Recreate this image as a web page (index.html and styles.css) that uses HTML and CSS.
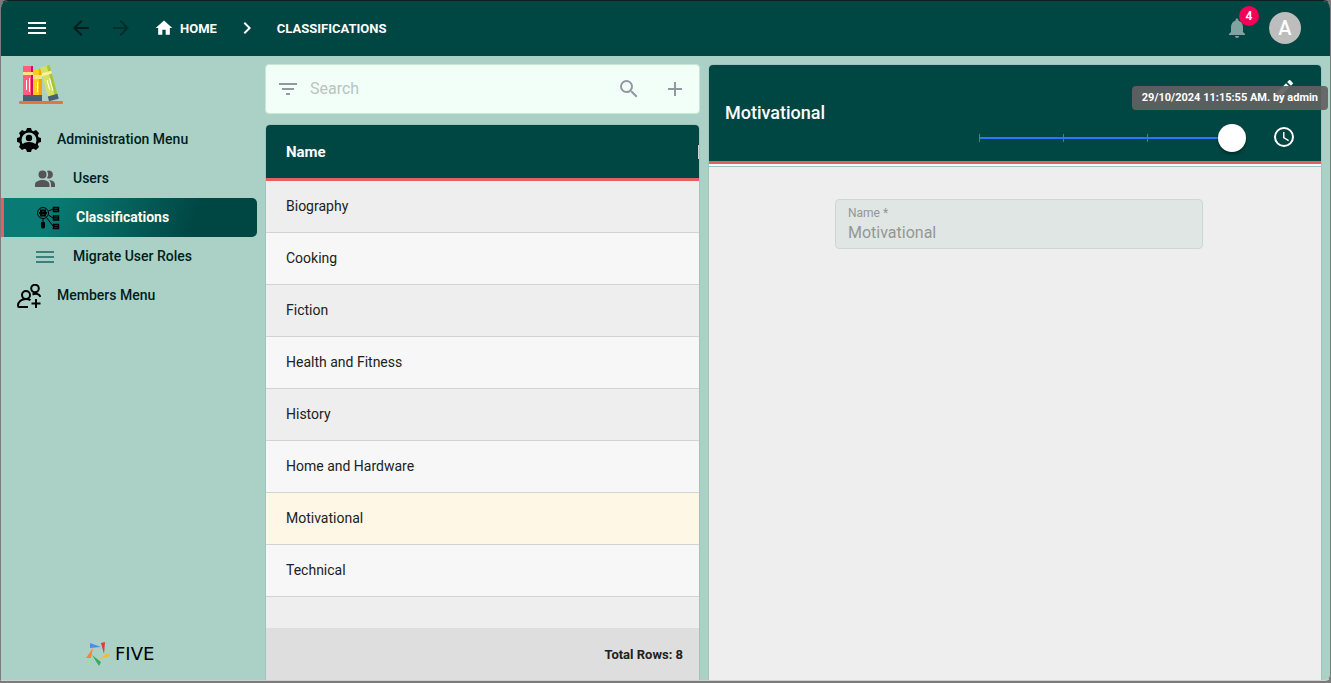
FILE: index.html
```html
<!DOCTYPE html>
<html lang="en">
<head>
<meta charset="utf-8">
<title>Classifications</title>
<link rel="stylesheet" href="styles.css">
</head>
<body>
<div class="app">
  <header class="topbar">
    <button class="icon-btn" aria-label="Menu"><svg class="icon" viewBox="0 0 24 24"><path d="M3 18h18v-2H3v2zm0-5h18v-2H3v2zm0-7v2h18V6H3z"/></svg></button>
    <button class="icon-btn nav-back" aria-label="Back"><svg class="icon" viewBox="0 0 24 24"><path d="M20 11H7.800l5.600-5.600L12 4l-8 8 8 8 1.400-1.400L7.800 13H20z"/></svg></button>
    <button class="icon-btn nav-forward" aria-label="Forward" disabled><svg class="icon" viewBox="0 0 24 24"><path d="M12 4l-1.400 1.400L16.200 11H4v2h12.200l-5.600 5.600L12 20l8-8z"/></svg></button>
    <nav class="crumbs" aria-label="Breadcrumb">
      <a class="crumb" href="#"><svg class="icon icon-home" viewBox="0 0 24 24"><path d="M10 20v-6h4v6h5v-8h3L12 3 2 12h3v8z"/></svg>HOME</a>
      <svg class="icon icon-chevron" viewBox="0 0 24 24"><path d="M10 6L8.600 7.400l4.600 4.600-4.600 4.600L10 18l6-6z"/></svg>
      <a class="crumb" href="#">CLASSIFICATIONS</a>
    </nav>
    <button class="icon-btn bell" aria-label="Notifications"><svg class="icon" viewBox="0 0 24 24"><path d="M12 22c1.100 0 2-.9 2-2h-4c0 1.100.9 2 2 2zm6-6v-5c0-3.070-1.640-5.640-4.500-6.320V4c0-.83-.67-1.500-1.500-1.500s-1.500.67-1.500 1.500v.68C7.630 5.360 6 7.920 6 11v5l-2 2v1h16v-1l-2-2z"/></svg><span class="badge">4</span></button>
    <button class="avatar">A</button>
  </header>

  <div class="workspace">
    <aside class="sidebar">
      <svg class="books" viewBox="0 0 44 40">
        <path fill="#ff5f7e" d="M4 1h10v35H4z"/><path fill="#d80b5c" d="M12 1h2v35h-2z"/><path fill="#ffe37d" d="M4 7h10v3H4z"/>
        <path fill="#475f75" d="M4 30h10v6H4z"/><path stroke="#fff" d="M7.500 15v10M10.500 13v14"/>
        <path fill="#ffcb1f" d="M14 4h9v32h-9z"/><path fill="#ffa000" d="M20 4h3v32h-3z"/><path fill="#ffe37d" d="M14 10h9v4h-9z"/>
        <path fill="#475f75" d="M14 30h9v6h-9z"/><path stroke="#fff" d="M18.500 17v10"/>
        <g transform="rotate(-15 31 36)"><path fill="#d4e165" d="M30 1h10v35H30z"/><path fill="#a5c63b" d="M37 1h3v35h-3z"/><path fill="#fff09a" d="M30 7h10v3H30z"/><path fill="#475f75" d="M30 31h10v5H30z"/><path stroke="#fff" d="M33.500 15v10M36.500 14v13"/></g>
        <rect fill="#dc7840" y="36" width="44" height="3" rx="1"/>
      </svg>
      <nav class="menu">
        <a class="menu-item" href="#"><svg class="icon" viewBox="0 0 24 24"><path d="M10 0h4l.8 2.500 1.700.7L19 2l3 3-1.200 2.500.7 1.700L24 10v4l-2.500.8-.7 1.700L22 19l-3 3-2.500-1.200-1.700.7L14 24h-4l-.8-2.500-1.700-.7L5 22l-3-3 1.200-2.500-.7-1.700L0 14v-4l2.500-.8.7-1.700L2 5l3-3 2.500 1.200 1.700-.7z"/><circle class="gear-hole" cx="12" cy="12" r="7.500"/><circle cx="12" cy="10" r="3.200"/><path d="M5 17c2-4 12-4 14 0-3 4-11 4-14 0z"/></svg><span class="menu-label">Administration Menu</span></a>
        <a class="menu-item sub" href="#"><svg class="icon icon-users" viewBox="0 0 24 24"><circle cx="9.500" cy="7.500" r="4"/><path d="M14 4a4 4 0 1 1 0 7c1.500-2 1.500-5 0-7zM2 20v-2.500C2 14.500 6 13 9.500 13s7 1.500 7 4.500V20zM16 13c3.500.2 6 1.700 6 4.500V20h-4v-2.500c0-2-.8-3.300-2-4.500z"/></svg><span class="menu-label">Users</span></a>
        <a class="menu-item sub active" href="#" aria-current="page"><svg class="icon icon-line" viewBox="0 0 24 24"><circle cx="7" cy="7" r="5.500"/><path d="M3 7h8M4 4.500h6M4 9.500h6M5 4v6M9 4v6" stroke-width="2"/><path d="M7 13v2M12.500 5L17 3M12.500 9l4.500 3M10.500 11.500L17 20"/><rect class="solid" x="5.500" y="16" width="3" height="6" rx="1"/><path stroke-width="1.500" d="M17.500 1.500h5v4h-5zM17.500 10h5v4h-5zM17.500 18.500h5v4h-5zM17.500 3.500h5M17.500 12h5M17.500 20.500h5"/></svg><span class="menu-label">Classifications</span></a>
        <a class="menu-item sub" href="#"><svg class="icon icon-teal" viewBox="0 0 24 24"><path d="M3 18h18v-2H3v2zm0-5h18v-2H3v2zm0-7v2h18V6H3z"/></svg><span class="menu-label">Migrate User Roles</span></a>
        <a class="menu-item" href="#"><svg class="icon icon-line icon-bold" viewBox="0 0 24 24"><circle cx="18" cy="4.500" r="3.800"/><circle cx="9" cy="11" r="4"/><path d="M11 23H2c-1 0-1-1-1-1.500C1 18 4 15 9 15c2 0 3 .3 4.500 1.200M15.500 10.500c3-1.500 7-.5 8 2.500M19 15v9M14.500 19.500h9"/></svg><span class="menu-label">Members Menu</span></a>
      </nav>
      <div class="brand">
        <svg class="brand-mark" viewBox="0 0 24 24"><path fill="#4a90e2" d="M4 1l11 4-11 1z"/><path fill="#e53935" d="M15 1l4-1-1 12z"/><path fill="#fbb924" d="M22 11l2 3-11 3z"/><path fill="#3fa958" d="M6 13l9 7-2 4z"/><path fill="#fa8231" d="M7 6L5 16l-5 0z"/></svg>
        <span class="brand-name">FIVE</span>
      </div>
    </aside>

    <section class="list">
      <form class="search" role="search">
        <button type="button" class="search-btn" aria-label="Filter"><svg class="icon" viewBox="0 0 24 24"><path d="M10 18h4v-2h-4v2zM3 6v2h18V6H3zm3 7h12v-2H6v2z"/></svg></button>
        <input class="search-input" type="search" placeholder="Search" aria-label="Search">
        <button type="button" class="search-btn" aria-label="Search"><svg class="icon" viewBox="0 0 24 24"><path d="M15.500 14h-.79l-.28-.27A6.470 6.470 0 0 0 16 9.500 6.500 6.500 0 1 0 9.500 16c1.610 0 3.090-.59 4.230-1.570l.27.28v.79l5 4.990L20.490 19l-4.990-5zm-6 0a4.500 4.500 0 1 1 0-9 4.500 4.500 0 0 1 0 9z"/></svg></button>
        <button type="button" class="search-btn" aria-label="Add"><svg class="icon" viewBox="0 0 24 24"><path d="M19 13h-6v6h-2v-6H5v-2h6V5h2v6h6v2z"/></svg></button>
      </form>
      <div class="grid">
        <table class="table">
          <thead><tr><th scope="col"><div class="th">Name<span class="resizer"></span></div></th></tr></thead>
          <tbody>
            <tr><td>Biography</td></tr>
            <tr><td>Cooking</td></tr>
            <tr><td>Fiction</td></tr>
            <tr><td>Health and Fitness</td></tr>
            <tr><td>History</td></tr>
            <tr><td>Home and Hardware</td></tr>
            <tr class="selected"><td>Motivational</td></tr>
            <tr><td>Technical</td></tr>
          </tbody>
        </table>
        <div class="total">Total Rows: 8</div>
      </div>
    </section>

    <section class="detail">
      <header class="detail-head">
        <h1 class="title">Motivational</h1>
        <div class="actions">
          <button class="action" aria-label="Edit"><svg class="icon" viewBox="0 0 24 24"><path d="M3 17.250V21h3.750L17.810 9.940l-3.750-3.750L3 17.250zM20.710 7.040a1 1 0 0 0 0-1.410l-2.340-2.340a1 1 0 0 0-1.410 0l-1.830 1.830 3.750 3.750 1.830-1.830z"/></svg></button>
          <div class="history">
            <input class="slider" type="range" min="0" max="3" value="3" aria-label="Version">
            <button class="action" aria-label="History"><svg class="icon" viewBox="0 0 24 24"><path d="M12 2a10 10 0 1 0 0 20 10 10 0 0 0 0-20zm0 18a8 8 0 1 1 0-16 8 8 0 0 1 0 16zm.5-13H11v6l5.250 3.150.75-1.230-4.500-2.670z"/></svg></button>
          </div>
          <div class="tooltip" role="tooltip">29/10/2024 11:15:55 AM. by admin</div>
        </div>
      </header>
      <div class="detail-body">
        <div class="field">
          <label for="name">Name *</label>
          <input id="name" type="text" value="Motivational" disabled>
        </div>
      </div>
    </section>
  </div>
</div>
</body>
</html>
```
FILE: styles.css
```css
* { box-sizing: border-box; }

body {
  margin: 0;
  height: 100vh;
  background: #7b7b7b;
  font-family: Roboto, "Liberation Sans", sans-serif;
  font-size: 14px;
  color: #212121;
}

button, input { font: inherit; }
button { border: 0; padding: 0; background: none; color: inherit; }
a { color: inherit; text-decoration: none; }

.app {
  display: flex;
  flex-direction: column;
  height: calc(100vh - 2px);
  border: 1px solid #7b7b7b;
  border-top-color: #0b1f1e;
  border-bottom-color: #d0d0d0;
  border-radius: 8px 8px 6px 0;
  background: #abd1c6;
  overflow: hidden;
}

.icon { width: 24px; height: 24px; fill: currentColor; flex: none; }

/* Top bar */
.topbar {
  display: flex;
  align-items: center;
  flex: none;
  height: 55px;
  padding: 0 29px 1px 16px;
  background: #004643;
  color: #fff;
}
.icon-btn { display: flex; justify-content: center; width: 40px; }
.nav-back { margin-left: 4px; color: #001e1d; }
.nav-forward { color: #00302e; }
.crumbs { display: flex; align-items: center; margin-left: 13px; }
.crumb { display: flex; align-items: center; gap: 6px; font-size: 13px; font-weight: 700; }
.icon-home { width: 20px; height: 20px; }
.icon-chevron { margin: 0 18px; }
.bell { position: relative; margin-left: auto; color: #80a2a1; }
.badge {
  position: absolute;
  top: -10px;
  right: -2px;
  width: 20px;
  border-radius: 10px;
  background: #f50057;
  color: #fff;
  font-size: 12px;
  font-weight: 700;
  line-height: 20px;
}
.avatar {
  width: 32px;
  height: 32px;
  margin-left: 12px;
  border-radius: 50%;
  background: #bdbdbd;
  font-size: 20px;
  font-weight: 500;
  line-height: 32px;
}

.workspace { display: flex; flex: 1; min-height: 0; }

/* Sidebar */
.sidebar { display: flex; flex-direction: column; flex: none; width: 264px; }
.books { width: 44px; height: 40px; margin: 9px 18px 15px; }
.menu-item {
  display: flex;
  align-items: center;
  gap: 16px;
  height: 39px;
  margin-right: 8px;
  padding-left: 16px;
  color: #001e1d;
  font-weight: 500;
}
.menu-label { padding-bottom: 2px; }
.menu-item.sub { padding-left: 32px; }
.menu-item.active {
  border-left: 3px solid #e16162;
  border-radius: 0 5px 5px 0;
  background: linear-gradient(110deg, #0a7a74 20%, #004643 75%);
  color: #fffbe8;
  font-weight: 700;
}
.menu-item .icon { color: #000; }
.menu-item .icon-users { color: #555; }
.menu-item .icon-teal { color: #37827d; }
.icon-line { fill: none; stroke: currentColor; }
.icon-line .solid { fill: currentColor; }
.icon-bold { stroke-width: 2; }
.gear-hole { fill: #abd1c6; }
.brand {
  display: flex;
  align-items: center;
  gap: 5px;
  margin: auto 0 14px 85px;
  color: #000;
}
.brand-mark { width: 24px; height: 24px; }
.brand-name { font-family: "DejaVu Sans", sans-serif; font-size: 18px; line-height: 24px; }

/* List */
.list { display: flex; flex-direction: column; gap: 10px; flex: none; width: 435px; padding-top: 8px; }
.search {
  display: flex;
  align-items: center;
  height: 50px;
  padding: 0 12px 0 10px;
  border: 1px solid #c4ead0;
  border-radius: 4px;
  background: #f2fff9;
}
.search-btn { display: flex; color: #9297a0; }
.search-btn + .search-btn { margin-left: 22px; }
.search-input {
  flex: 1;
  min-width: 0;
  padding: 0 10px 2px;
  border: 0;
  outline: 0;
  background: none;
  font-size: 16px;
}
.search-input::placeholder { color: #b9c4bf; }
.grid {
  display: flex;
  flex-direction: column;
  flex: 1;
  border: 1px solid #9fc4bd;
  border-bottom: 0;
  border-radius: 5px 5px 0 0;
  background: #eee;
  overflow: hidden;
}
.table { width: 100%; border-collapse: separate; border-spacing: 0; }
.table th {
  height: 56px;
  padding: 0;
  border-bottom: 3px solid #e16162;
  background: #004643;
  color: #fff;
  font-size: 15px;
  font-weight: 700;
}
.th { display: flex; align-items: center; justify-content: space-between; padding-left: 20px; }
.resizer { width: 1px; height: 14px; background: #d0d0d0; }
.table td { height: 52px; padding: 0 20px 2px; border-bottom: 1px solid #d3d3d3; background: #eee; }
.table tr:nth-child(even) td { background: #f7f7f7; }
.table .selected td { background: #fff7e6; }
.total {
  margin-top: auto;
  padding: 2px 16px 0 0;
  background: #dedede;
  font-size: 13px;
  font-weight: 700;
  line-height: 50px;
  text-align: right;
}

/* Detail */
.detail {
  display: flex;
  flex-direction: column;
  flex: 1;
  min-width: 0;
  margin: 8px 8px 0;
  border: 1px solid #9fc4bd;
  border-bottom: 0;
  border-radius: 5px 5px 0 0;
  background: #eee;
}
.detail-head {
  display: flex;
  align-items: center;
  justify-content: space-between;
  padding: 0 13px 0 16px;
  border-bottom: 3px solid #e16162;
  border-radius: 4px 4px 0 0;
  background: #004643;
  color: #fff;
}
.title { margin: 0; padding-bottom: 2px; font-size: 18px; font-weight: 500; }
.actions { position: relative; display: flex; flex-direction: column; align-items: flex-end; }
.action { display: flex; align-items: center; justify-content: center; width: 48px; height: 48px; }
.history { display: flex; align-items: center; gap: 14px; }
.slider {
  appearance: none;
  width: 281px;
  height: 28px;
  margin: 2px 0 0;
  background:
    linear-gradient(#2979ff, #2979ff) 14px 13px / 253px 2px no-repeat,
    linear-gradient(#2979ff, #2979ff) 14px 10px / 1px 8px no-repeat,
    linear-gradient(#2979ff, #2979ff) 98px 10px / 1px 8px no-repeat,
    linear-gradient(#2979ff, #2979ff) 182px 10px / 1px 8px no-repeat;
}
.slider::-webkit-slider-thumb {
  appearance: none;
  width: 28px;
  height: 28px;
  border-radius: 50%;
  background: #fff;
  box-shadow: 0 2px 3px rgba(0, 0, 0, .4);
}
.tooltip {
  position: absolute;
  top: 21px;
  right: -20px;
  padding: 0 10px;
  border-radius: 4px;
  background: rgba(97, 97, 97, .92);
  font-size: 11px;
  font-weight: 700;
  line-height: 24px;
  white-space: nowrap;
}
.detail-body {
  flex: 1;
  margin-top: 2px;
  padding: 32px 118px 0 126px;
  border-top: 1px solid #9fc4bd;
  box-shadow: 0 -2px #fafafa;
}
.field {
  display: flex;
  flex-direction: column;
  height: 50px;
  padding: 5px 12px;
  border: 1px solid #cfd5d3;
  border-radius: 4px;
  background: #e0e6e4;
  color: #939796;
}
.field label { font-size: 12px; line-height: 16px; }
.field input {
  width: 100%;
  height: 22px;
  padding: 0;
  border: 0;
  background: none;
  color: inherit;
  font-size: 16px;
}
```
